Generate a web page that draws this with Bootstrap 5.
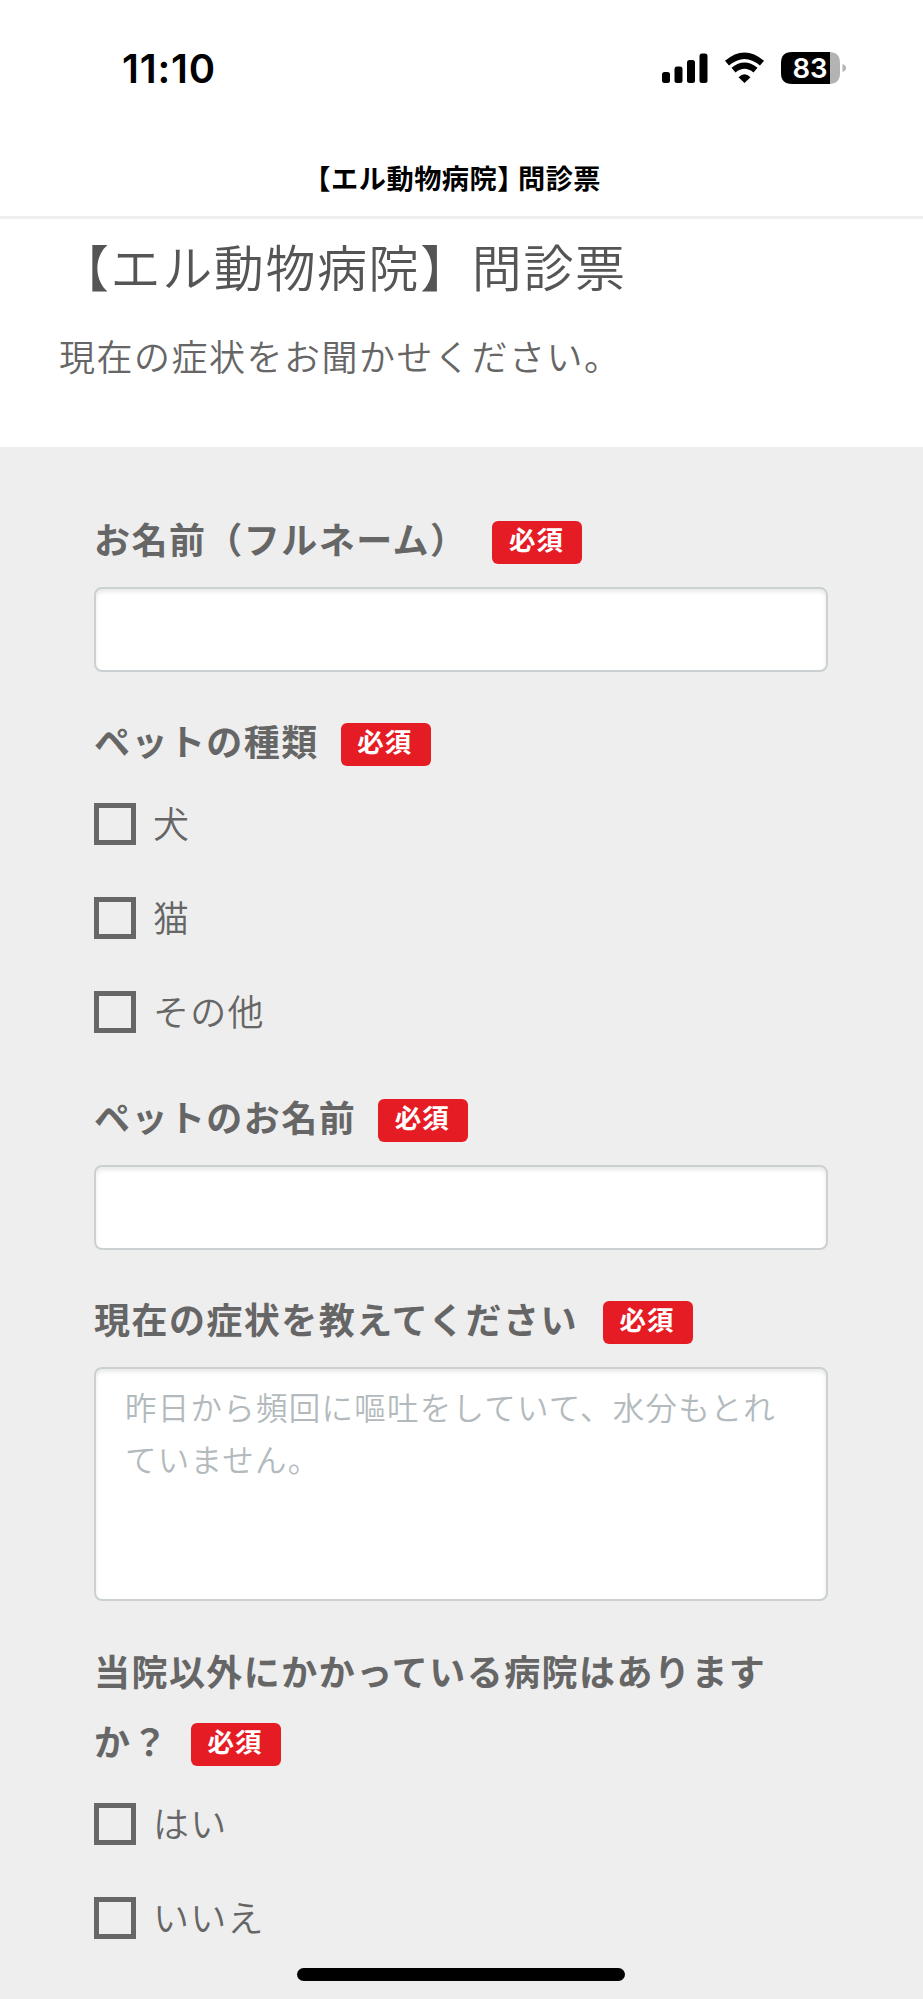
<!DOCTYPE html>
<html lang="ja">
<head>
<meta charset="utf-8">
<meta name="viewport" content="width=device-width, initial-scale=1">
<title>【エル動物病院】問診票</title>
<link href="https://cdn.jsdelivr.net/npm/bootstrap@5.3.0/dist/css/bootstrap.min.css" rel="stylesheet">
<style>
html, body { overflow: hidden; }
body { font-family: "Noto Sans CJK JP", sans-serif; color: #666; background: #fff; height: 1999px; }
.status-bar { height: 138px; padding: 0 75px 0 122px; color: #000; }
.clock { font: 600 40px/1 Inter, sans-serif; letter-spacing: .8px; }
.page-name { height: 78px; font-size: 27.2px; font-weight: 700; letter-spacing: .5px; line-height: 79px; color: #000; margin-left: -5px; }
.half { font-feature-settings: "halt"; }
.intro { height: 231px; border-top: 3px solid #efefef; padding: 0 59px; }
.intro h1 { font-size: 50px; font-weight: 350; letter-spacing: 1.6px; line-height: 70px; color: #555; margin: 11px 0 0; }
.lead-text { font-size: 36px; font-weight: 350; letter-spacing: 1.5px; line-height: 60px; margin: 25px 0 0; }
.questions { background: #eee; padding: 56px 95px 0; }
.q-label { display: block; font-size: 36px; font-weight: 700; letter-spacing: 1.45px; line-height: 70px; margin-left: -1px; padding-bottom: 2px; }
.req { display: inline-block; height: 43px; width: 90px; margin-left: 22px; padding: 0 2px 0 0; border-radius: 6px; background: #e61c24; font-size: 26.5px; font-weight: 700; letter-spacing: 1px; line-height: 35px; text-align: center; vertical-align: 4px; }
.req.wide { margin-left: 25px; }
.field { border: 2px solid #cbd0d2; border-radius: 8px; box-shadow: inset 0 3px 4px rgba(0,0,0,.09); background: #fff; width: 734px; margin: 12px 0 33px -1px; }
input.field { height: 85px; }
textarea.field { height: 234px; resize: none; padding: 11px 28px 10px 29px; margin-bottom: 34px; font-size: 31.5px; font-weight: 350; letter-spacing: 1.25px; line-height: 52px; }
.field::placeholder { color: #b3babd; opacity: 1; }
.options { margin-bottom: 22px; }
.option { height: 94px; font-size: 36px; font-weight: 350; letter-spacing: 1.3px; gap: 17px; margin-left: -1px; }
.option .form-check-input { width: 42px; height: 42px; border: 5px solid #666; border-radius: 0; background: transparent; margin: 0; }
.option label { line-height: 60px; margin-top: -4px; }
.home-bar { width: 328px; height: 13px; border-radius: 7px; background: #000; margin-left: 297px; margin-bottom: 18px; }
</style>
</head>
<body class="d-flex flex-column">
<header class="text-center flex-shrink-0">
  <div class="status-bar d-flex align-items-center justify-content-between">
    <span class="clock">11:10</span>
    <svg width="186" height="34" viewBox="0 0 186 34" aria-hidden="true">
      <rect x="0" y="20" width="8" height="11" rx="2.5"/><rect x="12.500" y="14.500" width="8" height="16.500" rx="2.5"/><rect x="25" y="8" width="8" height="23" rx="2.5"/><rect x="37.500" y="1.500" width="8" height="29.500" rx="2.500"/>
      <g fill="none" stroke="#000" stroke-width="6.200"><path d="M65 11.200Q82.500-3.800 100 11.200"/><path d="M71.500 18.200Q82.500 9 93.500 18.200"/></g>
      <path d="M76.500 25.300Q82.500 19.200 88.500 25.300L82.500 31Z"/>
      <path fill="#b3b3b3" d="M167 0h0q11 0 11 11v10q0 11-11 11z"/>
      <path d="M168 0h-38q-11 0-11 11v10q0 11 11 11h38z"/>
      <path fill="#b3b3b3" d="M180.500 12q3.500 1.500 3.500 4t-3.500 4z"/>
      <text x="148" y="26" text-anchor="middle" fill="#fff" font-family="Inter, sans-serif" font-size="27.500" font-weight="600">83</text>
    </svg>
  </div>
  <div class="page-name"><span class="half">【</span>エル動物病院<span class="half">】</span> 問診票</div>
</header>
<section class="intro flex-shrink-0">
  <h1>【エル動物病院】問診票</h1>
  <p class="lead-text">現在の症状をお聞かせください。</p>
</section>
<main class="questions flex-fill">
  <form>
    <label class="q-label" for="owner">お名前（フルネーム）<span class="badge req wide">必須</span></label>
    <input class="form-control field" id="owner" type="text">

    <span class="q-label">ペットの種類<span class="badge req">必須</span></span>
    <div class="options">
      <div class="option d-flex align-items-center"><input class="form-check-input" type="checkbox" id="dog"><label for="dog">犬</label></div>
      <div class="option d-flex align-items-center"><input class="form-check-input" type="checkbox" id="cat"><label for="cat">猫</label></div>
      <div class="option d-flex align-items-center"><input class="form-check-input" type="checkbox" id="other"><label for="other">その他</label></div>
    </div>

    <label class="q-label" for="pet">ペットのお名前<span class="badge req">必須</span></label>
    <input class="form-control field" id="pet" type="text">

    <label class="q-label" for="symptom">現在の症状を教えてください<span class="badge req wide">必須</span></label>
    <textarea class="form-control field" id="symptom" placeholder="昨日から頻回に嘔吐をしていて、水分もとれていません。"></textarea>

    <span class="q-label">当院以外にかかっている病院はあります<br>か？<span class="badge req">必須</span></span>
    <div class="option d-flex align-items-center"><input class="form-check-input" type="checkbox" id="yes"><label for="yes">はい</label></div>
    <div class="option d-flex align-items-center"><input class="form-check-input" type="checkbox" id="no"><label for="no">いいえ</label></div>
  </form>
</main>
<footer class="fixed-bottom"><div class="home-bar"></div></footer>
<script src="https://cdn.jsdelivr.net/npm/bootstrap@5.3.0/dist/js/bootstrap.bundle.min.js"></script>
</body>
</html>
